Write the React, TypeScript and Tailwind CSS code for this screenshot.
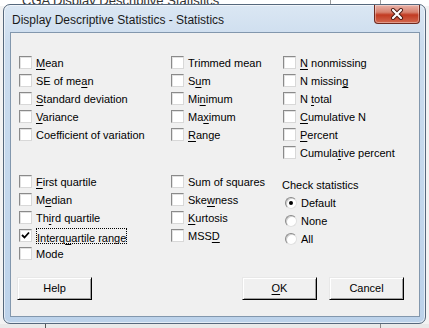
import React from "react";

const font = { fontFamily: '"Liberation Sans", Arial, sans-serif' };

function Label({ text, u }: { text: string; u?: number }) {
  if (u === undefined) return <span>{text}</span>;
  return (
    <span>
      {text.slice(0, u)}
      <span className="underline underline-offset-[2px]">{text[u]}</span>
      {text.slice(u + 1)}
    </span>
  );
}

function Check({
  text,
  u,
  checked,
  focus,
}: {
  text: string;
  u?: number;
  checked?: boolean;
  focus?: boolean;
}) {
  return (
    <div className="flex h-[18px] items-start">
      <div className="mt-[2px] flex h-[13px] w-[13px] shrink-0 items-center justify-center border border-t-[#8a8a8a] border-l-[#8a8a8a] border-b-[#d8d8d8] border-r-[#d8d8d8] bg-white shadow-[inset_1px_1px_0_#e2e2e2]">
        {checked && (
          <svg width="9" height="9" viewBox="0 0 9 9">
            <path d="M1 4 L3.5 6.5 L8 1.5" fill="none" stroke="#000" strokeWidth="1.8" />
          </svg>
        )}
      </div>
      <div
        className={
          "ml-[4px] leading-[18px] " +
          (focus ? "h-[16px] mt-[1px] leading-[14px] border border-dotted border-black px-[0px]" : "")
        }
      >
        <Label text={text} u={u} />
      </div>
    </div>
  );
}

function Radio({ text, on }: { text: string; on?: boolean }) {
  return (
    <div className="flex h-[18px] items-center pl-[3px]">
      <div className="flex h-[12px] w-[12px] items-center justify-center rounded-full border border-t-[#8a8a8a] border-l-[#8a8a8a] border-b-[#e0e0e0] border-r-[#e0e0e0] bg-white shadow-[inset_1px_1px_0_#cfcfcf]">
        {on && <div className="h-[4px] w-[4px] rounded-full bg-black" />}
      </div>
      <span className="ml-[4px]">{text}</span>
    </div>
  );
}

function Btn({ children }: { children: React.ReactNode }) {
  return (
    <div className="flex h-[23px] w-[75px] items-center justify-center border border-t-[#e8e8e8] border-l-[#e8e8e8] border-b-black border-r-black bg-[#f0f0f0] shadow-[inset_1px_1px_0_#ffffff,inset_-1px_-1px_0_#a0a0a0]">
      {children}
    </div>
  );
}

export default function App() {
  return (
    <div className="relative h-[328px] w-[429px] overflow-hidden bg-[#f3f3f3]" style={font}>
      {/* background window remnants */}
      <div className="flex h-[6px] overflow-hidden bg-white">
        <div className="ml-[22px] -mt-[9px] text-[13px] text-[#333]">CGA Display Descriptive Statistics</div>
      </div>
      <div className="absolute left-[330px] top-0 h-[5px] w-px bg-[#9a9a9a]" />
      <div className="absolute left-[380px] top-0 h-[5px] w-px bg-[#9a9a9a]" />
      <div className="absolute left-0 top-[324px] h-[4px] w-full bg-[#e9e9e9]" />
      <div className="absolute left-[45px] top-[322px] h-[6px] w-px bg-[#555]" />
      <div className="absolute left-[380px] top-[322px] h-[6px] w-px bg-[#8a8a8a]" />

      {/* dialog */}
      <div className="absolute left-[3px] top-[4px] flex h-[320px] w-[423px] flex-col rounded-[7px] border border-[#56687c] bg-[linear-gradient(180deg,#dbe7f3_0%,#cbdcee_12%,#c3d7ec_60%,#bcd2ea_100%)] shadow-[inset_0_0_0_1px_rgba(255,255,255,0.6)]">
        {/* title bar */}
        <div className="flex h-[27px] shrink-0 items-start">
          <div className="ml-[8px] mt-[8px] text-[12px] leading-[14px] text-[#1a1a1a]">
            Display Descriptive Statistics - Statistics
          </div>
          <div className="ml-auto mr-[5px] flex h-[19px] w-[46px] items-center justify-center rounded-b-[4px] border border-t-0 border-[#6e2a20] bg-[linear-gradient(180deg,#e9b2a8_0%,#d7826f_40%,#c23b22_55%,#d2684f_100%)] shadow-[inset_0_0_0_1px_rgba(255,255,255,0.35)]">
            <svg width="14" height="12" viewBox="0 0 14 12">
              <path d="M3 2 L11 10 M11 2 L3 10" stroke="#4a1a12" strokeWidth="4" strokeLinecap="round" />
              <path d="M3 2 L11 10 M11 2 L3 10" stroke="#ffffff" strokeWidth="2.2" strokeLinecap="round" />
            </svg>
          </div>
        </div>

        {/* client area */}
        <div className="ml-[6px] mr-[5px] flex h-[285px] flex-col border border-[#8297ad] bg-[#f0f0f0] text-[11px] text-black">
          <div className="grid grid-cols-[152px_112px_1fr] pl-[8px] pt-[21px]">
            <div className="flex flex-col">
              <Check text="Mean" u={0} />
              <Check text="SE of mean" u={8} />
              <Check text="Standard deviation" u={0} />
              <Check text="Variance" u={0} />
              <Check text="Coefficient of variation" />
            </div>
            <div className="flex flex-col">
              <Check text="Trimmed mean" />
              <Check text="Sum" u={1} />
              <Check text="Minimum" u={2} />
              <Check text="Maximum" u={2} />
              <Check text="Range" u={0} />
            </div>
            <div className="flex flex-col">
              <Check text="N nonmissing" u={0} />
              <Check text="N missing" u={8} />
              <Check text="N total" u={2} />
              <Check text="Cumulative N" u={0} />
              <Check text="Percent" u={0} />
              <Check text="Cumulative percent" u={6} />
            </div>
          </div>

          <div className="mt-[11px] grid grid-cols-[152px_112px_1fr] pl-[8px]">
            <div className="flex flex-col">
              <Check text="First quartile" u={0} />
              <Check text="Median" u={1} />
              <Check text="Third quartile" u={2} />
              <Check text="Interquartile range" u={6} checked focus />
              <Check text="Mode" />
            </div>
            <div className="flex flex-col">
              <Check text="Sum of squares" />
              <Check text="Skewness" u={3} />
              <Check text="Kurtosis" u={0} />
              <Check text="MSSD" u={3} />
            </div>
            <div className="-ml-[1px] flex flex-col">
              <div className="h-[21px] pt-[5px] leading-[14px]">Check statistics</div>
              <Radio text="Default" on />
              <Radio text="None" />
              <Radio text="All" />
            </div>
          </div>

          <div className="mt-[14px] flex pl-[6px] pr-[15px]">
            <Btn>Help</Btn>
            <div className="ml-auto flex gap-[12px]">
              <Btn>
                <Label text="OK" u={0} />
              </Btn>
              <Btn>Cancel</Btn>
            </div>
          </div>
        </div>
      </div>
    </div>
  );
}
